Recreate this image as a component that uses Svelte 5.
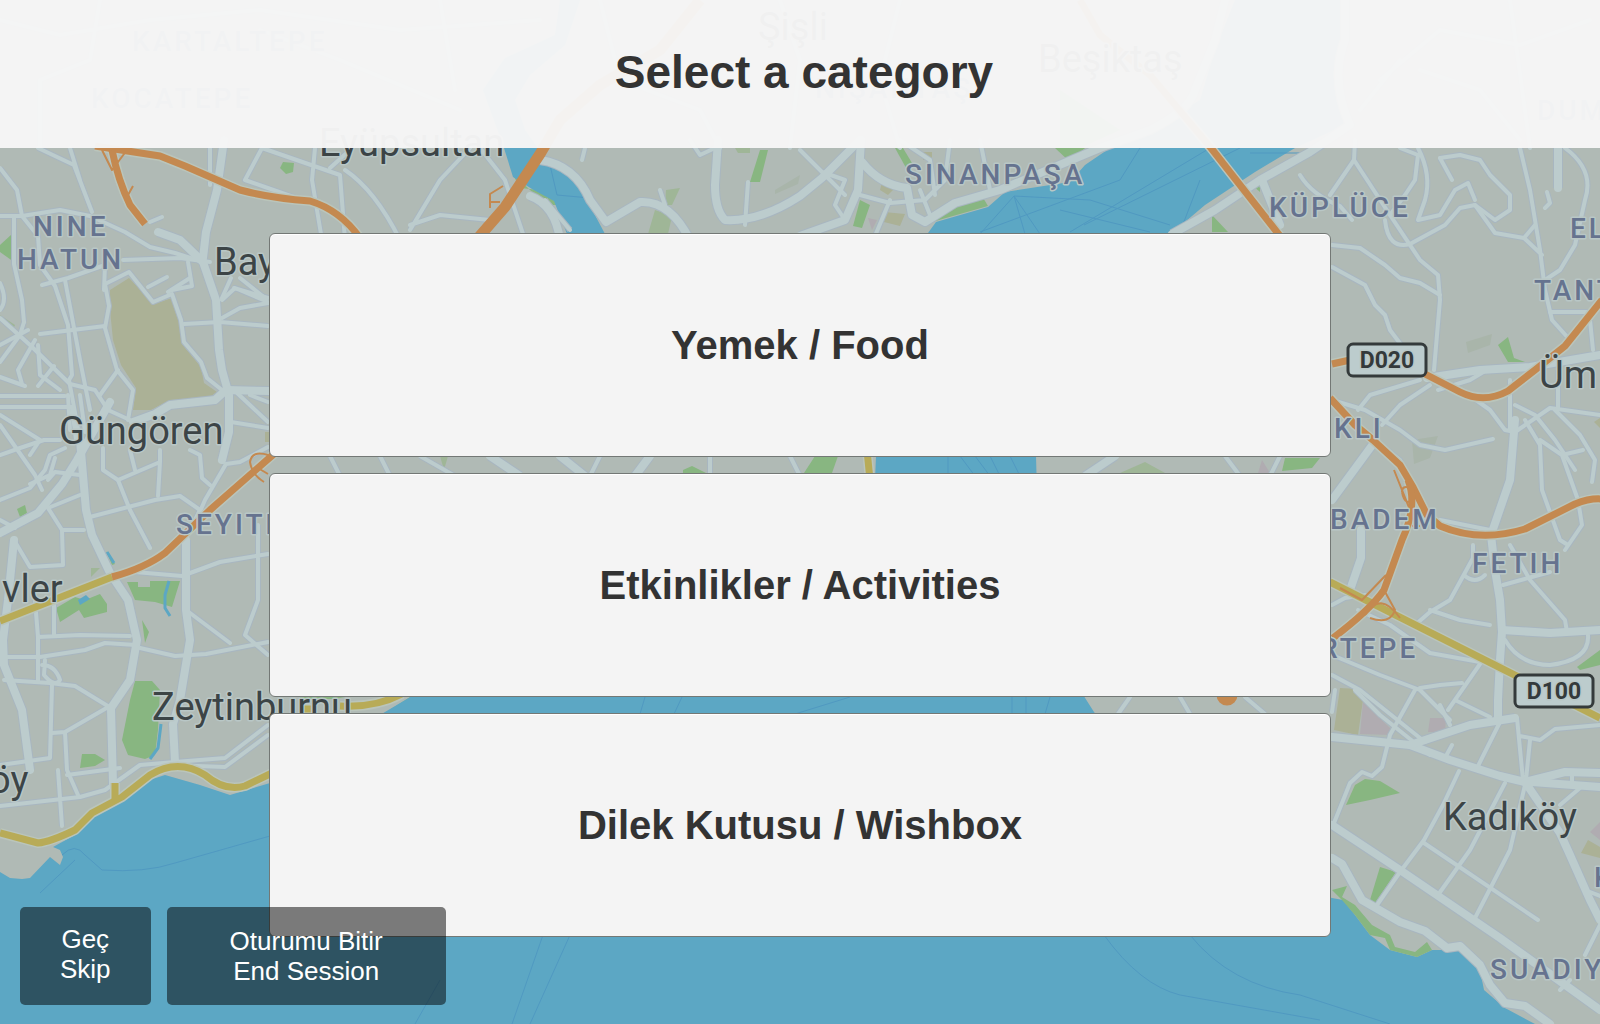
<script>
  const categories = ['Yemek / Food', 'Etkinlikler / Activities', 'Dilek Kutusu / Wishbox'];

  const wideRoads = [
    'M224 140L217 190 206 232 203 258',
    'M158 232L180 240 203 262 216 300 219 350 222 370 229 395 229 432 222 460',
    'M133 422L155 414 170 405 215 400 226 390 270 391',
    'M80 440L86 510 92 535 110 573 128 600 137 640 130 680 111 708 113 784',
    'M0 533L38 513 62 484 77 460 110 402',
    'M186 540L186 610 190 640 180 700 173 724 175 762',
    'M14 540L8 600 3 640 4 665 22 710 30 770',
    'M718 140L715 185Q715 210 725 220Q760 222 800 196L822 178 860 140',
    'M540 160Q575 165 590 200L606 222 640 202Q670 200 690 240',
    'M530 196Q555 205 560 240',
    'M861 140L858 190 845 220 800 236',
    'M862 162Q880 185 907 188L912 215 925 222 955 203 1000 190 1100 148 1150 130Q1190 110 1195 90L1215 40 1225 0',
    'M1172 234L1215 210 1260 180 1310 152 1350 125Q1330 80 1345 40V0',
    'M1262 180L1280 225',
    'M1558 148L1558 188',
    'M1515 420L1510 480 1491 535 1495 570 1500 600 1502 632 1500 660 1498 700 1498 720',
    'M1502 630L1550 633 1600 630',
    'M1427 378L1480 370 1530 367 1600 355',
    'M1332 737L1410 745 1450 760 1500 776 1525 782 1565 772 1600 773',
    'M1410 745L1470 725 1515 718',
    'M1525 782L1560 833 1570 855 1590 900 1600 920',
    'M1332 825L1400 870 1500 938 1600 1010',
    'M1332 858L1342 864 1362 900 1400 922 1425 931 1447 948 1460 946 1480 965 1490 985 1505 1003 1525 1006 1550 1024',
    'M1332 500L1376 440',
    'M1361 530L1361 558 1350 590',
    'M1532 782L1600 787',
    'M490 456L520 476M560 456L585 476M650 456L635 476M1115 456L1085 476'
  ];

  const narrowRoads = [
    'M0 168L17 190 22 216 38 236 40 265 55 286 68 325 72 375 69 380 80 440',
    'M38 148L74 165 92 212M70 148L80 180',
    'M0 216L22 216 60 210 90 216 125 232 150 247 175 253 200 261',
    'M14 216V264L22 300 24 322',
    'M123 260L180 258 210 262',
    'M42 285L68 278 105 265 104 290M0 283Q8 300 0 310',
    'M105 284L129 272 153 302 172 294 181 320 184 342 201 362 207 378 222 390',
    'M105 284L109 306 105 328 117 370 133 390 128 420',
    'M65 280L80 360 90 410M148 287L167 277M172 290L192 286 188 262',
    'M168 292L190 278M150 222L162 217',
    'M0 318L30 345 70 384 95 390 108 410 130 420',
    'M24 322L20 335 0 362M35 340L18 370 22 384M38 345L40 375 60 390',
    'M40 334L105 326M54 366L38 386M0 396H65M0 407H72L76 440M0 415L40 440 30 455',
    'M0 345L28 330M0 377L25 386M68 395L70 430M80 395L85 432M118 370L100 395',
    'M184 324L220 322 268 326M222 300L235 288 268 302M234 288L268 298M222 318L240 308 268 303',
    'M231 278L222 298M240 278L265 298M236 392L268 422M231 422L268 428M250 395L268 402',
    'M0 500L30 488 45 470 50 455 65 448M0 455L20 448 44 440 60 440',
    'M0 425L35 475 42 490M30 484L50 475 55 458M80 475L55 472 48 480',
    'M48 508L62 530H84M62 530L63 565 30 567 14 540M48 508L80 495M0 520L15 528',
    'M86 518L155 500 180 496 200 510 195 520',
    'M103 448L103 470 118 480 130 510 150 548',
    'M118 480L160 462V450M160 462L158 496M130 450L135 470',
    'M190 450L200 455 202 478 210 485M268 447L240 462 226 464 205 500 192 530',
    'M135 572L182 576 220 562 268 554M258 525L258 600 245 635 268 655',
    'M186 610L230 643M140 648L175 656 206 654 268 642',
    'M0 657L40 657 85 650 105 643 136 645M35 600L38 637 80 635 130 636M54 602L54 635',
    'M4 680L50 683 75 686 111 708M45 660L44 675Q55 688 60 680 55 665 42 665M38 637V682',
    'M52 685L50 758 0 765M52 733L65 732 110 706M65 732L67 770 78 795M67 775L120 768',
    'M0 806L80 797 105 790 140 765 175 762 225 758 268 725M170 765L225 767 268 735M58 770L62 826',
    'M210 148V185M262 148L245 180 302 200M262 148L340 175 345 240M315 148L312 180 322 240',
    'M345 170Q375 190 400 240M470 148L440 180 410 230M410 225L440 215 490 220M480 148L505 180 525 240',
    'M330 168L350 150M545 200L570 230M585 148L582 160M690 140L700 155 715 148',
    'M660 190L665 205M748 182L745 225M800 150L822 172 845 195M822 172L845 180 835 205 845 220',
    'M900 140L930 160 935 195M950 140L945 180 925 200 890 203 860 195M890 200L875 236M920 190L930 215M980 140L990 190',
    'M1300 175Q1312 195 1340 206L1352 220M1355 140L1354 160 1330 195M1354 160L1390 215 1420 260 1438 275 1440 300 1434 370',
    'M1400 148L1418 155 1415 180 1405 195 1390 215M1418 148Q1432 175 1425 200L1418 220 1440 215 1455 190 1468 183 1475 200',
    'M1440 158L1460 155 1480 160 1490 175 1510 195 1510 210 1495 220 1475 205 1460 208 1445 225 1410 244Q1388 250 1385 220',
    'M1440 158L1452 180M1475 205L1495 233 1524 238 1542 255M1520 148L1530 190 1540 250 1545 290 1552 320 1570 340',
    'M1565 148Q1595 170 1585 200L1575 245 1560 270 1545 280M1545 208L1550 203 1547 192M1535 225L1524 238',
    'M1332 245L1360 248 1385 265 1400 278 1420 283 1440 295M1332 267L1365 285 1375 305 1385 315 1390 330 1405 350',
    'M1550 312H1590M1590 320L1593 350M1438 390L1470 380 1490 368',
    'M1332 400L1365 410 1400 430 1420 445 1445 450 1493 439M1420 380L1370 395 1358 410M1430 385L1400 405 1382 425',
    'M1462 390L1490 410 1505 430 1515 432 1550 408 1600 415M1510 380V430M1558 370V408M1515 405L1535 415 1555 440 1575 470',
    'M1525 420L1540 445 1542 490 1560 540 1568 545M1540 440L1562 455 1583 450M1562 455L1578 500 1582 525 1565 550',
    'M1555 410L1580 435 1595 460 1592 482M1375 440L1400 460 1420 500 1430 515M1440 520L1490 530',
    'M1473 545V558L1450 600 1430 612 1415 625M1464 575Q1475 585 1485 575M1430 610L1460 620 1490 625',
    'M1503 585L1550 572M1530 580L1565 620 1567 632M1510 545L1530 580M1505 640Q1520 665 1550 665 1590 660 1588 635',
    'M1358 610L1390 625 1430 653 1480 662M1332 655L1380 675 1420 690 1450 720M1332 675L1360 690 1400 722 1425 742',
    'M1415 690L1390 735 1382 767 1372 776 1362 772 1350 783 1334 823M1420 688L1440 685 1462 683M1480 664L1448 710M1455 700L1490 717',
    'M1355 690L1380 715 1430 755M1440 705L1450 725M1500 722L1476 770M1452 745L1446 756',
    'M1517 718L1523 780M1530 740L1526 780M1520 736L1540 740 1555 729 1600 725',
    'M1459 771L1443 805 1424 840 1400 872 1377 905M1505 783L1470 850 1438 895M1525 785L1510 850 1475 918',
    'M1424 843L1538 920M1572 775L1572 785M1580 788L1560 805M1590 892L1600 896M1600 925L1585 955M1570 980L1560 990',
    'M1332 605L1345 598 1365 595M1335 690L1332 712M330 456L340 476M380 456L390 476M790 456L800 476M420 456L455 476M1225 456L1240 476',
    'M600 456L590 476M710 456V476M1280 456L1270 476M1130 697L1118 714M1180 697L1190 714M1245 697L1265 714',
    'M0 20L60 35 150 20 260 10 400 30 540 20M100 0L90 60 40 80 40 148M260 30L340 60 460 110M440 0L455 90',
    'M600 0L620 80 700 110 720 148M780 0L800 60 790 148M900 0L880 80 900 148M1380 80L1440 30 1520 45 1590 20M1400 60L1360 110M1420 70L1480 90 1520 140M1510 0L1530 148'
  ];

  const ferries = [
    'M62 855Q75 842 85 855L102 870Q145 873 175 863L270 836',
    'M40 893L75 860M543 935L512 1024M1104 935Q1140 985 1180 995L1320 1020M1190 935Q1230 985 1300 995L1390 1024',
    'M570 935L530 1024M440 980L415 1024M1084 225L1240 148M1070 232L1210 148M1250 153H1300M1140 148L1120 180 980 232',
    'M1014 196L1040 234M1014 196L1090 200 1170 225M1014 196L1025 234M1014 196L980 234M1200 180L1180 232M1060 210L1150 232',
    'M960 456L975 476M975 456L990 476M948 456V476M990 456L1000 476M1010 456L1020 476M645 697L640 714M682 697L674 714M850 697L795 714',
    'M550 165L557 195 590 198M1012 697V714M1026 697V714M1050 697L1045 714'
  ];

  const greens = [
    'M0 245L12 234 14 262 0 252Z', 'M283 162L294 163 293 172 286 174 280 168Z',
    'M760 150H768L760 182H750Z', 'M903 148L912 163 910 175 895 148Z', 'M860 200L870 205 862 228 853 226Z',
    'M932 222L950 204 982 196 988 206 960 214Z', 'M1055 148H1085L1070 162Z', 'M1252 185L1260 181V192Z',
    'M1212 215L1228 232H1212Z', 'M512 173L520 188 540 190 560 205 548 205 530 190Z', 'M17 509L25 505 27 513 20 517Z',
    'M106 551L115 564 112 565Z', 'M56 608L75 597 85 600 100 594 107 604V612L84 618 79 610 60 622Z',
    'M127 582H138V587H150V581H180L172 607 155 602 135 600Z', 'M142 620L149 632 145 643Z',
    'M135 681H152L160 690 158 730 155 755 145 759 128 755 122 740 130 700Z', 'M82 754H95L105 760 95 766 80 768Z',
    'M90 820L120 803 110 813Z', 'M683 470L692 466 706 473H683Z', 'M804 473L815 456H838L832 473Z', 'M1285 458H1320L1312 468 1282 471Z',
    'M1498 345L1508 337 1514 358 1525 362H1508Z', 'M1346 805L1355 785 1365 779 1380 781 1400 793 1370 800Z',
    'M1380 867L1396 872 1375 903 1370 900Z',
    'M1577 667L1600 650V665L1580 670Z', 'M410 697H418L398 712 385 713Z', 'M300 697H345L335 699H300Z', 'M1060 90L1120 130 1080 148H1060Z'
  ];

  const paleGreens = [
    'M666 190L680 188 672 205H665Z', 'M655 210L672 216 668 234H648Z', 'M0 315L15 325 12 332Z', 'M91 568H100L91 577Z',
    'M735 148H750V153H738Z', 'M1120 473L1145 462 1165 473Z', 'M440 456H448L444 470Z'
  ];

  const dimGreens = ['M1466 342L1492 334 1490 345 1468 353Z', 'M1412 440L1438 436 1430 458 1414 464Z', 'M775 190L800 175 798 184 775 194Z'];

  const olives = [
    'M110 290L129 278 154 304 172 298 181 328 182 344 201 367 204 383 217 392 208 398 170 400 151 410H133L136 388 121 365 113 340 110 310Z',
    'M882 182L895 188 888 195 880 190Z', 'M884 212L905 214 900 226 884 222Z', 'M923 152H932V160H923Z', 'M1340 688L1358 689 1363 700 1358 735 1334 730Z',
    'M1581 853L1588 840 1600 847V858Z', 'M1594 422L1600 418V428Z', 'M265 432H269V442H265Z'
  ];

  const mauves = ['M1363 702L1390 728 1392 735 1360 734Z', 'M1430 718H1446L1445 732H1428Z', 'M1590 832L1600 822V840Z', 'M868 218L877 220 872 230Z', 'M1262 460L1270 473H1258Z'];

  const oranges = [
    'M95 146L160 156 185 166 240 190Q270 198 310 201Q340 210 360 238',
    'M112 150Q118 180 130 205L145 224',
    'M275 453L210 510 165 553Q145 568 112 577',
    'M1080 0L1100 35 1150 75 1211 148 1280 236',
    'M1332 364L1350 360',
    'M1425 374L1460 392Q1484 404 1508 391L1535 370 1565 346Q1578 330 1602 300',
    'M1330 398L1355 425 1373 440 1400 465 1413 487 1427 515 1440 526Q1480 543 1525 529L1575 504Q1590 498 1602 499',
    'M1408 480Q1418 505 1402 540L1384 590Q1370 610 1333 638'
  ];

  const ramps = [
    'M102 150L112 170 127 150M128 195L133 186M268 455Q252 450 250 462 252 475 264 482M258 468L268 474M490 208V194L503 186M490 202H500',
    'M1394 470L1410 510M1402 492Q1402 485 1410 488L1415 498Q1405 508 1402 492M1386 575L1362 600 1340 588M1370 618Q1390 625 1395 610L1384 590M1365 615Q1380 590 1400 618M1412 526H1420'
  ];

  const yellows = [
    'M112 577L0 621',
    'M0 833L38 843Q50 842 75 830L92 813 122 797 150 775Q178 758 205 775Q225 792 245 786L272 773',
    'M115 783V800', 'M300 709H312M340 706Q375 708 402 694', 'M867 450L870 480', 'M1330 582L1600 718'
  ];

  const districts = [
    ['KARTALTEPE', 132, 51], ['KOCATEPE', 91, 108], ['NIŞANTAŞI', 815, 98], ['DUM', 1537, 120],
    ['NINE', 33, 236], ['HATUN', 17, 269], ['SEYITN', 176, 534], ['SINANPAŞA', 905, 184], ['KÜPLÜCE', 1269, 217],
    ['EL', 1570, 238], ['TANT', 1534, 300], ['KLI', 1334, 438], ['BADEM', 1330, 529], ['FETIH', 1472, 573],
    ['RTEPE', 1320, 658], ['K', 1594, 887], ['SUADIY', 1490, 979]
  ];

  const towns = [
    ['Eyüpsultan', 319, 156], ['Şişli', 758, 40], ['Beşiktaş', 1038, 72], ['Bay', 214, 275], ['Güngören', 59, 444],
    ['vler', 2, 602], ['Zeytinburnu', 152, 720], ['öy', -11, 793], ['Üm', 1539, 388], ['Kadıköy', 1443, 830]
  ];

  const shields = [['D020', 1347, 343], ['D100', 1514, 674]];
</script>

<div class="screen">
  <svg class="map" viewBox="0 0 1600 1024" preserveAspectRatio="xMidYMid slice" aria-hidden="true">
    <g class="olive">{#each olives as d}<path {d} />{/each}</g>
    <g class="mauve">{#each mauves as d}<path {d} />{/each}</g>
    <g class="dim">{#each dimGreens as d}<path {d} />{/each}</g>
    <g class="pale">{#each paleGreens as d}<path {d} />{/each}</g>
    <g class="green">{#each greens as d}<path {d} />{/each}</g>

    <g class="water">
      <path d="M0 872L10 878 22 879 30 878 50 857 60 865 63 857 60 850 53 847 75 835 95 815 115 805 140 783 165 775 200 785 230 795 270 783 385 712 412 696 870 600 876 456 928 233 936 222 988 207 1005 192 1070 182 1085 165 1110 148 1150 130 1200 100 1215 50 1235 0H1345L1340 90 1345 125 1295 148 1255 172 1205 205 1172 233 1036 456 1040 600 1080 690 1094 712 1200 850 1332 898 1343 900 1355 915 1370 935 1390 950 1417 957 1432 950 1460 950 1480 970 1484 990 1505 1008 1535 1024H0Z" />
      <path d="M540 42L505 58 483 90 504 148 513 177 532 189 554 201 567 234H605L587 200 576 180 545 158 525 130 515 100 530 75 565 45 580 0H560L555 35Z" />
      <path d="M78 600L86 595 90 599 80 605Z" />
      <path class="stream" d="M169 581L165 595V608L170 616M161 724L158 748 150 759M107 552L114 563" />
    </g>
    <g class="green"><path d="M1332 890L1347 886 1342 897 1355 905 1372 925 1390 935 1395 947 1415 952 1427 942 1432 950 1417 957 1390 950 1385 938 1370 935 1355 915 1342 900Z" /></g>
    <g class="ferry">{#each ferries as d}<path {d} />{/each}</g>

    <g class="casing narrow">{#each narrowRoads as d}<path {d} />{/each}</g>
    <g class="casing wide">{#each wideRoads as d}<path {d} />{/each}</g>
    <g class="road narrow">{#each narrowRoads as d}<path {d} />{/each}</g>
    <g class="road wide">{#each wideRoads as d}<path {d} />{/each}</g>

    <g class="edge">{#each yellows as d}<path {d} />{/each}{#each oranges as d}<path {d} />{/each}</g>
    <g class="yellow">{#each yellows as d}<path {d} />{/each}</g>
    <g class="ramp">{#each ramps as d}<path {d} />{/each}</g>
    <g class="orange">
      {#each oranges as d}<path {d} />{/each}
      <path class="trunk" d="M700 0L660 50 600 85 560 120 540 154 505 207 478 238" />
      <circle cx="1227" cy="695" r="7" />
    </g>

    <g class="district">{#each districts as [name, x, y]}<text {x} {y}>{name}</text>{/each}</g>
    <g class="town">{#each towns as [name, x, y]}<text {x} {y}>{name}</text>{/each}</g>
    {#each shields as [name, x, y]}
      <g class="shield">
        <rect x={x + 1} y={y + 1} width="78" height="32" rx="5" />
        <text x={x + 40} y={y + 25}>{name}</text>
      </g>
    {/each}
  </svg>

  <header><h1>Select a category</h1></header>

  <main>
    {#each categories as category}
      <button class="card" type="button">{category}</button>
    {/each}
  </main>

  <footer>
    <button class="skip" type="button">Geç<br />Skip</button>
    <button class="end" type="button">Oturumu Bitir<br />End Session</button>
  </footer>
</div>

<style>
  :global(body) {
    margin: 0;
  }
  .screen {
    position: relative;
    min-height: 100vh;
    overflow: hidden;
    font-family: 'Liberation Sans', Arial, sans-serif;
    color: #333;
  }
  .map {
    position: absolute;
    inset: 0;
    width: 100%;
    height: 100%;
    background: #b0bab5;
  }
  .map path {
    stroke-linejoin: round;
  }
  .olive { fill: #abb196; }
  .mauve { fill: #b0acb1; }
  .dim { fill: #a9b5aa; }
  .pale { fill: #9fb697; }
  .green { fill: #88b681; }
  .water { fill: #5ca7c4; }
  .stream { fill: none; stroke: #5ca7c4; stroke-width: 3; }
  .ferry, .casing, .road, .edge, .yellow, .ramp, .orange path { fill: none; }
  .ferry { stroke: #5099c1; stroke-width: 1; }
  .casing { stroke: #a8b6c0; }
  .road { stroke: #bccccd; stroke-linecap: round; }
  .casing.narrow { stroke-width: 6; }
  .casing.wide { stroke-width: 10; }
  .road.narrow { stroke-width: 4; }
  .road.wide { stroke-width: 8; }
  .edge { stroke: #bac5bb; stroke-width: 10; }
  .yellow { stroke: #b8ab57; stroke-width: 7; }
  .ramp { stroke: #c48950; stroke-width: 2; }
  .orange { stroke: #c48950; stroke-width: 7; }
  .orange circle { fill: #c48950; }
  .orange .trunk { stroke-width: 11; }
  .map text {
    font-family: Roboto, sans-serif;
    paint-order: stroke;
    stroke: #b9c7c6;
    stroke-width: 3;
    stroke-linejoin: round;
  }
  .district text {
    font-size: 28px;
    font-weight: 500;
    letter-spacing: 3px;
    fill: #66738f;
  }
  .town text {
    font-size: 38px;
    fill: #3c4446;
  }
  .shield rect {
    fill: #bccccd;
    stroke: #343a3b;
    stroke-width: 3;
  }
  .map .shield text {
    font-size: 23px;
    font-weight: 700;
    text-anchor: middle;
    fill: #343a3b;
  }
  header {
    position: relative;
    box-sizing: border-box;
    height: 148px;
    padding: 0 0 4px 8px;
    display: flex;
    align-items: center;
    justify-content: center;
    background: rgba(246, 246, 246, 0.97);
  }
  h1 {
    margin: 0;
    font-size: 46px;
    line-height: 52px;
  }
  main {
    position: relative;
    display: flex;
    flex-direction: column;
    gap: 16px;
    padding: 85px 269px 80px;
  }
  button {
    font-family: inherit;
    cursor: pointer;
  }
  .card {
    height: 224px;
    padding: 0;
    border: 1px solid #737875;
    border-radius: 6px;
    background: #f4f4f4;
    box-shadow: inset 0 1px 0 #fff;
    color: #333;
    font-size: 40px;
    font-weight: 700;
  }
  footer {
    position: absolute;
    left: 20px;
    bottom: 19px;
    display: flex;
    gap: 16px;
  }
  footer button {
    height: 98px;
    border: 0;
    border-radius: 5px;
    background: rgba(0, 0, 0, 0.5);
    color: #fff;
    font-size: 26px;
    line-height: 30px;
  }
  .skip {
    padding: 0 40px 4px;
  }
  .end {
    padding: 0 63px;
  }
</style>
